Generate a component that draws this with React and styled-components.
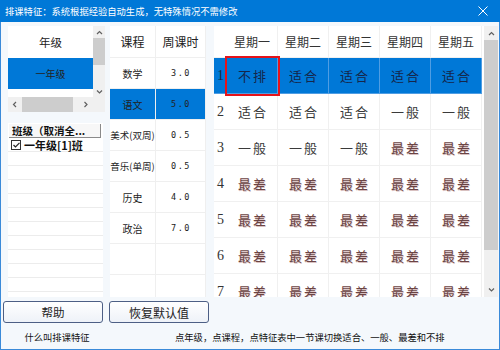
import React from 'react';
import styled, { createGlobalStyle } from 'styled-components';

const Global = createGlobalStyle`
  html, body { margin: 0; padding: 0; background: #f4f8fc; }
  body { font-family: "Noto Sans CJK SC", "Noto Sans", sans-serif; }
`;

const BLUE = '#0078d7';

const Window = styled.div`
  width: 500px;
  height: 350px;
  display: flex;
  flex-direction: column;
  background: #f4f8fc;
  overflow: hidden;
`;

const TitleBar = styled.div`
  height: 22px;
  flex: none;
  background: ${BLUE};
  color: #fff;
  display: flex;
  align-items: center;
  justify-content: space-between;
  padding: 0 12px 0 5px;
  font-size: 9.3px;
  white-space: nowrap;
`;

const Body = styled.div`
  flex: 1;
  display: flex;
  flex-direction: column;
  border: 1px solid #3a8ad9;
  border-top: none;
  min-height: 0;
`;

const Main = styled.div`
  height: 275px;
  flex: none;
  display: flex;
  padding: 4px 1px 0 7px;
  box-sizing: border-box;
`;

const LeftCol = styled.div`
  width: 97px;
  display: flex;
  flex-direction: column;
  gap: 11px;
`;

const GradeBox = styled.div`
  height: 86px;
  display: grid;
  grid-template-columns: 85px 12px;
  grid-template-rows: 71px 15px;
  background: #f0f0f0;
`;

const GradeList = styled.div`
  background: #fff;
  display: flex;
  flex-direction: column;
`;

const GradeItem = styled.div`
  height: ${(p) => p.$h}px;
  display: flex;
  align-items: center;
  justify-content: center;
  font-size: ${(p) => (p.$head ? 11.5 : 10)}px;
  color: #222;
  background: ${(p) => (p.$active ? BLUE : '#fff')};
`;

const VScroll = styled.div`
  background: #f0f0f0;
  display: flex;
  flex-direction: column;
  align-items: center;
  padding: ${(p) => p.$pad};
  box-sizing: border-box;
`;

const Thumb = styled.div`
  width: ${(p) => p.$w || '100%'};
  height: ${(p) => p.$h || '100%'};
  background: #cdcdcd;
  margin: ${(p) => p.$m || 0};
  flex: none;
`;

const HScroll = styled.div`
  background: #f0f0f0;
  display: flex;
  align-items: center;
  padding: 0 4px;
  box-sizing: border-box;
`;

const Arrow = ({ dir }) => {
  const pts = {
    up: '1,4 3.5,1.5 6,4',
    down: '1,1.5 3.5,4 6,1.5',
    left: '4,1 1.5,3.5 4,6',
    right: '1.5,1 4,3.5 1.5,6',
  }[dir];
  const vertical = dir === 'up' || dir === 'down';
  return (
    <svg width={vertical ? 7 : 6} height={vertical ? 6 : 7} style={{ flex: 'none' }}>
      <polyline points={pts} fill="none" stroke="#606060" strokeWidth="1.2" />
    </svg>
  );
};

const ClassBox = styled.div`
  flex: 1;
  width: 95px;
  background: #fff;
  display: flex;
  flex-direction: column;
  padding-top: 1px;
  overflow: hidden;
`;

const ClassHead = styled.div`
  height: 13px;
  margin: 0 2px 0 1px;
  flex: none;
  background: #f7f7f7;
  border-bottom: 1px solid #8a8a8a;
  border-right: 1px solid #8a8a8a;
  font-size: 10.5px;
  font-weight: 700;
  color: #111;
  display: flex;
  align-items: center;
  padding-left: 3px;
  white-space: nowrap;
  overflow: hidden;
`;

const ClassRow = styled.div`
  height: 13px;
  flex: none;
  border-bottom: 1px solid #ececec;
  display: flex;
  align-items: center;
  gap: 3px;
  padding-left: 3px;
  font-size: 11px;
  font-weight: 700;
  color: #111;
  white-space: nowrap;
`;

const Check = styled.span`
  width: 8px;
  height: 8px;
  border: 1px solid #333;
  display: inline-flex;
  align-items: center;
  justify-content: center;
  background: #fff;
`;

const CourseTable = styled.div`
  width: 96px;
  height: 271px;
  margin-left: 5px;
  display: grid;
  grid-template-columns: 46px 50px;
  grid-auto-rows: 31px;
  grid-template-rows: 32px;
  background: #fff;
  overflow: hidden;
  align-content: start;
`;

const CCell = styled.div`
  display: flex;
  align-items: center;
  justify-content: center;
  border-right: 1px solid #efefef;
  border-bottom: 1px solid #efefef;
  box-sizing: border-box;
  background: ${(p) => (p.$active ? BLUE : '#fff')};
  color: #222;
  font-size: ${(p) => (p.$head ? 12 : p.$small ? 9.5 : p.$num ? 8.5 : 10)}px;
  font-family: ${(p) => (p.$num ? '"DejaVu Sans Mono", monospace' : 'inherit')};
  letter-spacing: ${(p) => (p.$num ? '1.5px' : 0)};
  padding-left: ${(p) => (p.$num ? '1px' : 0)};
  white-space: nowrap;
  overflow: hidden;
`;

const GridWrap = styled.div`
  margin-left: 8px;
  width: 284px;
  height: 271px;
  display: flex;
  background: #fff;
`;

const Table = styled.div`
  width: 270px;
  height: 271px;
  overflow: hidden;
  display: grid;
  grid-template-columns: 13px repeat(5, 51px);
  grid-template-rows: 32px;
  grid-auto-rows: 36px;
  align-content: start;
`;

const TCell = styled.div`
  position: relative;
  display: flex;
  align-items: center;
  justify-content: center;
  box-sizing: border-box;
  border-right: 1px solid ${(p) => (p.$active ? '#4f9de3' : '#f0f0f0')};
  border-bottom: 1px solid ${(p) => (p.$active ? '#4f9de3' : '#f0f0f0')};
  background: ${(p) => (p.$active ? BLUE : '#fff')};
  font-size: 13px;
  letter-spacing: 2px;
  padding-left: 2px;
  color: ${(p) => (p.$active ? '#15264a' : p.$bad ? '#6a4444' : '#3a3a3a')};
  text-shadow: ${(p) => (p.$bad ? '0.5px 0.5px 0 rgba(190,150,150,0.6)' : 'none')};
  outline: ${(p) => (p.$picked ? '2px solid #e5131a' : 'none')};
  outline-offset: 0;
  z-index: ${(p) => (p.$picked ? 2 : 0)};
`;

const HeadCell = styled(TCell)`
  font-size: 12px;
  letter-spacing: 0;
  padding-left: 0;
  color: #333;
`;

const RowNum = styled.div`
  display: flex;
  align-items: center;
  justify-content: center;
  box-sizing: border-box;
  border-bottom: 1px solid ${(p) => (p.$active ? '#4f9de3' : '#f0f0f0')};
  background: ${(p) => (p.$active ? BLUE : '#fff')};
  font-family: "Liberation Serif", serif;
  font-size: 14px;
  color: ${(p) => (p.$active ? '#15264a' : '#333')};
`;

const Footer = styled.div`
  flex: 1;
  display: flex;
  flex-direction: column;
  padding: 4px 0 0 2px;
`;

const Buttons = styled.div`
  display: flex;
  gap: 6px;
`;

const Button = styled.button`
  width: 100px;
  height: 22px;
  border: 1px solid #4d5f85;
  border-radius: 3px;
  background: linear-gradient(#ffffff, #eef2f8);
  font-family: inherit;
  font-size: ${(p) => p.$fs}px;
  color: #222;
  padding: 0;
  display: flex;
  align-items: center;
  justify-content: center;
`;

const Notes = styled.div`
  margin-top: 7px;
  display: flex;
  align-items: center;
  font-size: 9.3px;
  color: #111;
  white-space: nowrap;
`;

const NoteLeft = styled.div`
  width: 108px;
  text-align: center;
`;

const NoteRight = styled.div`
  margin-left: 64px;
`;

const grid = [
  ['不排', '适合', '适合', '适合', '适合'],
  ['适合', '适合', '适合', '一般', '一般'],
  ['一般', '一般', '一般', '最差', '最差'],
  ['最差', '最差', '最差', '最差', '最差'],
  ['最差', '最差', '最差', '最差', '最差'],
  ['最差', '最差', '最差', '最差', '最差'],
  ['最差', '最差', '最差', '最差', '最差'],
];

const courses = [
  ['数学', '3.0'],
  ['语文', '5.0', true],
  ['美术(双周)', '0.5'],
  ['音乐(单周)', '0.5'],
  ['历史', '4.0'],
  ['政治', '7.0'],
  ['', ''],
  ['', ''],
];

export default function App() {
  return (
    <Window>
      <Global />
      <TitleBar>
        <span>排课特征：系统根据经验自动生成，无特殊情况不需修改</span>
        <svg width="10" height="10">
          <path d="M0.5 0.5 L9.5 9.5 M9.5 0.5 L0.5 9.5" stroke="#fff" strokeWidth="1" />
        </svg>
      </TitleBar>
      <Body>
        <Main>
          <LeftCol>
            <GradeBox>
              <GradeList>
                <GradeItem $h={32} $head>年级</GradeItem>
                <GradeItem $h={31} $active>一年级</GradeItem>
              </GradeList>
              <VScroll $pad="4px 0 2px">
                <Arrow dir="up" />
                <Thumb $h="27px" $m="2px 0 0" />
                <div style={{ flex: 1 }} />
                <Arrow dir="down" />
              </VScroll>
              <HScroll>
                <Arrow dir="left" />
                <Thumb $w="51px" $h="15px" $m="0 0 0 4px" />
                <div style={{ flex: 1 }} />
                <Arrow dir="right" />
              </HScroll>
              <div style={{ background: '#f0f0f0' }} />
            </GradeBox>
            <ClassBox>
              <ClassHead>班级（取消全...</ClassHead>
              <ClassRow>
                <Check>
                  <svg width="7" height="6">
                    <polyline points="0.5,3 2.5,5 6.5,0.8" fill="none" stroke="#222" strokeWidth="1.2" />
                  </svg>
                </Check>
                一年级[1]班
              </ClassRow>
              {Array.from({ length: 11 }).map((_, i) => (
                <ClassRow key={i} />
              ))}
            </ClassBox>
          </LeftCol>

          <CourseTable>
            <CCell $head>课程</CCell>
            <CCell $head>周课时</CCell>
            {courses.map(([name, hrs, active], i) => (
              <React.Fragment key={i}>
                <CCell $active={active} $small={name.length > 3}>{name}</CCell>
                <CCell $active={active} $num>{hrs}</CCell>
              </React.Fragment>
            ))}
          </CourseTable>

          <GridWrap>
            <Table>
              <RowNum />
              {['星期一', '星期二', '星期三', '星期四', '星期五'].map((d) => (
                <HeadCell key={d}>{d}</HeadCell>
              ))}
              {grid.map((row, r) => (
                <React.Fragment key={r}>
                  <RowNum $active={r === 0}>{r + 1}</RowNum>
                  {row.map((v, c) => (
                    <TCell
                      key={c}
                      $active={r === 0}
                      $bad={v === '最差'}
                      $picked={r === 0 && c === 0}
                    >
                      {v}
                    </TCell>
                  ))}
                </React.Fragment>
              ))}
            </Table>
            <VScroll $pad="5px 0 4px" style={{ width: 14 }}>
              <Arrow dir="up" />
              <Thumb $h="210px" $m="3px 0 0" />
              <div style={{ flex: 1 }} />
              <Arrow dir="down" />
            </VScroll>
          </GridWrap>
        </Main>

        <Footer>
          <Buttons>
            <Button $fs={11.5}>帮助</Button>
            <Button $fs={12}>恢复默认值</Button>
          </Buttons>
          <Notes>
            <NoteLeft>什么叫排课特征</NoteLeft>
            <NoteRight>点年级，点课程，点特征表中一节课切换适合、一般、最差和不排</NoteRight>
          </Notes>
        </Footer>
      </Body>
    </Window>
  );
}
